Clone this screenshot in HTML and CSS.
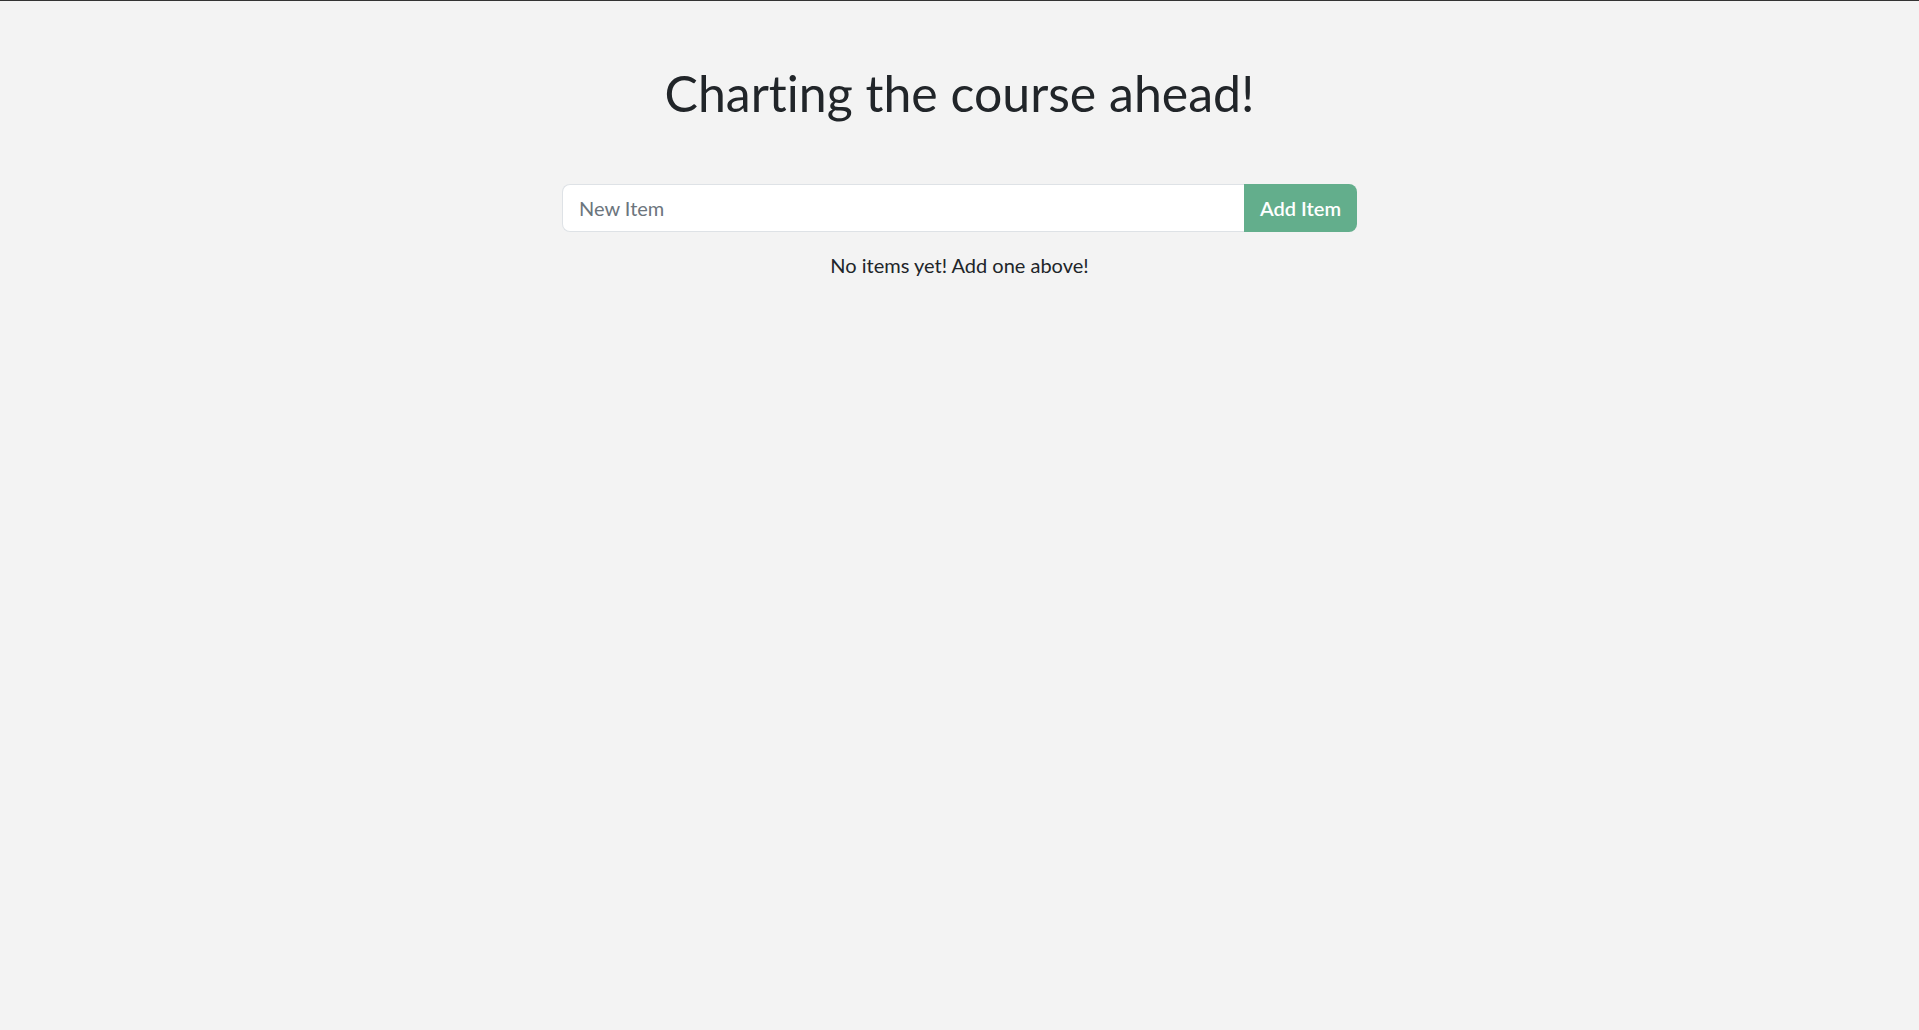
FILE: index.html
```html
<!DOCTYPE html>
<html lang="en">
<head>
<meta charset="utf-8">
<title>Charting the course ahead!</title>
<link rel="stylesheet" href="styles.css">
</head>
<body>
<main class="app">
  <h1 class="title">Charting the course ahead!</h1>
  <form class="add-form" onsubmit="return false;">
    <input class="item-input" type="text" placeholder="New Item">
    <button class="add-btn" type="submit">Add Item</button>
  </form>
  <p class="empty">No items yet! Add one above!</p>
</main>
</body>
</html>
```

FILE: styles.css
```css
html, body {
  margin: 0;
  padding: 0;
}
body {
  background: #f3f3f3;
  border-top: 1px solid #333333;
  min-height: 1029px;
  font-family: Lato, "Open Sans", sans-serif;
  font-variant-ligatures: none;
  color: #212529;
}
.app {
  display: flex;
  flex-direction: column;
  align-items: center;
}
.title {
  margin: 62px 0 0;
  font-size: 50px;
  font-weight: 400;
  line-height: 1.2;
  color: #212529;
}
.add-form {
  margin-top: 61px;
  width: 795px;
  display: flex;
}
.item-input {
  flex: 1;
  min-width: 0;
  height: 48px;
  box-sizing: border-box;
  padding: 8px 16px;
  font-family: Lato, sans-serif;
  font-size: 20px;
  color: #212529;
  background: #ffffff;
  border: 1px solid #dee2e6;
  border-right: none;
  border-radius: 8px 0 0 8px;
  outline: none;
}
.item-input::placeholder {
  color: #6c757d;
}
.add-btn {
  width: 113px;
  height: 48px;
  box-sizing: border-box;
  border: none;
  padding: 0;
  background: #63ae8c;
  color: #ffffff;
  font-family: Lato, sans-serif;
  font-size: 20px;
  font-weight: 600;
  border-radius: 0 8px 8px 0;
  cursor: pointer;
}
.empty {
  margin: 18px 0 0;
  font-size: 20px;
  line-height: 1.5;
}
```
